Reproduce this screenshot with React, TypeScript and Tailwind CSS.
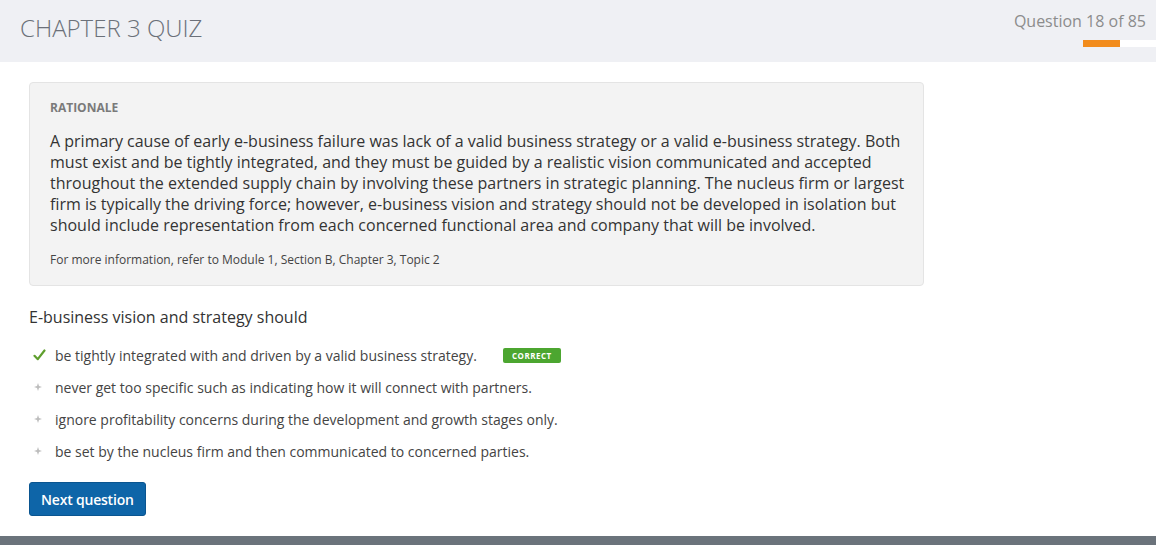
const rationale =
  "A primary cause of early e-business failure was lack of a valid business strategy or a valid e-business strategy. Both must exist and be tightly integrated, and they must be guided by a realistic vision communicated and accepted throughout the extended supply chain by involving these partners in strategic planning. The nucleus firm or largest firm is typically the driving force; however, e-business vision and strategy should not be developed in isolation but should include representation from each concerned functional area and company that will be involved.";

const options = [
  { text: "be tightly integrated with and driven by a valid business strategy.", correct: true },
  { text: "never get too specific such as indicating how it will connect with partners.", correct: false },
  { text: "ignore profitability concerns during the development and growth stages only.", correct: false },
  { text: "be set by the nucleus firm and then communicated to concerned parties.", correct: false },
];

function Check() {
  return (
    <svg width="13" height="12" viewBox="0 0 13 12" className="text-[#5f9f2e]">
      <path d="M1.5 6.8 L4.8 10.2 L11.5 1.5" fill="none" stroke="currentColor" strokeWidth="2.2" strokeLinecap="round" strokeLinejoin="round" />
    </svg>
  );
}

function Bullet() {
  return (
    <svg width="8" height="8" viewBox="0 0 8 8" className="text-[#bdbdbd]">
      <path d="M4 0 L5 3 L8 4 L5 5 L4 8 L3 5 L0 4 L3 3 Z" fill="currentColor" />
    </svg>
  );
}

export default function App() {
  return (
    <div className="flex min-h-[545px] flex-col bg-white font-['Open_Sans',sans-serif] text-[#333]">
      <header className="flex h-[62px] items-start justify-between bg-[#eff0f4] pl-5">
        <h1 className="mt-[12px] text-[24px] font-light leading-[32px] text-[#6b7079]">CHAPTER 3 QUIZ</h1>
        <div className="mt-[10px] flex flex-col items-end">
          <span className="pr-[10px] text-[16px] leading-[22px] text-[#8c8c8c]">Question 18 of 85</span>
          <div className="mt-[8px] flex h-[7px] w-[73px] bg-white">
            <div className="h-full w-[37px] bg-[#f28c1c]"></div>
          </div>
        </div>
      </header>
      <main className="flex-1 px-[29px] pt-5">
        <div className="w-[895px] rounded border border-[#e4e4e4] bg-[#f3f3f3] pb-[17px] pl-5 pr-[12px] pt-[17px]">
          <div className="text-[12px] font-bold leading-4 text-[#7a7a7a]">RATIONALE</div>
          <p className="mt-[15px] text-[16px] leading-[21px] text-[#333]">{rationale}</p>
          <p className="mt-4 text-[12px] leading-4 text-[#444]">For more information, refer to Module 1, Section B, Chapter 3, Topic 2</p>
        </div>
        <div className="mt-5 text-[16px] leading-[22px] text-[#333]">E-business vision and strategy should</div>
        <ul className="mt-[11px]">
          {options.map(o => (
            <li key={o.text} className="flex h-8 items-center text-[14px] text-[#444]">
              <span className="flex w-[26px] items-center justify-start pl-[4px]">
                {o.correct ? <Check /> : <span className="pl-[1px]"><Bullet /></span>}
              </span>
              <span>{o.text}</span>
              {o.correct ? (
                <span className="ml-[26px] rounded-[2px] bg-[#4ca630] px-[9px] py-[1px] text-[8px] font-bold leading-[13px] tracking-[0.5px] text-white">
                  CORRECT
                </span>
              ) : null}
            </li>
          ))}
        </ul>
        <button className="mt-[15px] h-[34px] rounded-[3px] border border-[#0a5590] bg-[#0e65a8] px-[11px] text-[14px] font-semibold tracking-[-0.2px] text-white">
          Next question
        </button>
      </main>
      <footer className="mt-5 h-[9px] bg-[#6b737b]"></footer>
    </div>
  );
}
